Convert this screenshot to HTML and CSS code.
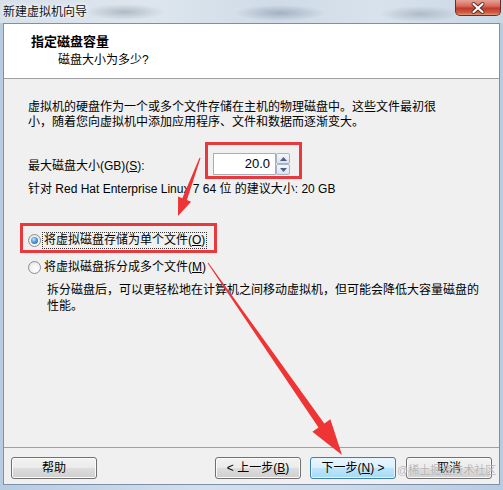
FILE: index.html
```html
<!DOCTYPE html>
<html lang="zh-CN">
<head>
<meta charset="utf-8">
<title>新建虚拟机向导</title>
<link rel="stylesheet" href="styles.css">
</head>
<body>
<div class="window">
  <div class="titlebar">
    <span class="title">新建虚拟机向导</span>
    <div class="close">
      <svg width="44" height="14" viewBox="0 0 44 14"><path d="M17.5 3 L26.5 11 M26.5 3 L17.5 11" stroke="#5a2a26" stroke-width="4" stroke-linecap="round"/><path d="M17.5 3 L26.5 11 M26.5 3 L17.5 11" stroke="#ffffff" stroke-width="2.2" stroke-linecap="round"/></svg>
    </div>
  </div>
  <div class="client">
    <div class="header">
      <div class="h-title">指定磁盘容量</div>
      <div class="h-sub">磁盘大小为多少?</div>
    </div>
    <div class="content">
      <p class="intro">虚拟机的硬盘作为一个或多个文件存储在主机的物理磁盘中。这些文件最初很小，随着您向虚拟机中添加应用程序、文件和数据而逐渐变大。</p>
      <div class="size-row">
        <span class="size-label">最大磁盘大小(GB)(<u>S</u>):</span>
        <div class="spin">
          <div class="spin-input">20.0</div>
          <div class="spin-btns">
            <span class="spin-btn"><svg width="7" height="4" viewBox="0 0 7 4"><path d="M0 4 L3.5 0 L7 4Z" fill="#4d6185"/></svg></span>
            <span class="spin-btn"><svg width="7" height="4" viewBox="0 0 7 4"><path d="M0 0 L7 0 L3.5 4Z" fill="#4d6185"/></svg></span>
          </div>
        </div>
      </div>
      <div class="hint">针对 Red Hat Enterprise Linux 7 64 位 的建议大小: 20 GB</div>
      <div class="radio-row first">
        <span class="radio checked"></span>
        <span class="radio-label focus">将虚拟磁盘存储为单个文件(<u>O</u>)</span>
      </div>
      <div class="radio-row">
        <span class="radio"></span>
        <span class="radio-label">将虚拟磁盘拆分成多个文件(<u>M</u>)</span>
      </div>
      <p class="desc">拆分磁盘后，可以更轻松地在计算机之间移动虚拟机，但可能会降低大容量磁盘的性能。</p>
    </div>
    <div class="footer">
      <button class="btn">帮助</button>
      <button class="btn back">&lt; 上一步(<u>B</u>)</button>
      <button class="btn next">下一步(<u>N</u>) &gt;</button>
      <button class="btn cancel">取消</button>
    </div>
  </div>
  <svg class="marks" width="503" height="490" viewBox="0 0 503 490">
    <rect x="206.5" y="143.5" width="94" height="34" fill="none" stroke="#e83a3e" stroke-width="3"/>
    <rect x="21.5" y="224.5" width="194" height="27" fill="none" stroke="#e83a3e" stroke-width="3"/>
    <polygon fill="#ee3434" points="199.5,157.8 200.5,158.2 186.9,200.1 191.1,201.8 178,216 178.1,196.6 182.3,198.3"/>
    <polygon fill="#ee3434" points="208.4,262.7 324.3,423.5 330.4,419.2 342,455 312.4,431.8 318.5,427.5 207.6,263.3"/>
  </svg>
  <div class="watermark">@稀土掘金技术社区</div>
</div>
</body>
</html>
```

FILE: styles.css
```css
html, body {
  margin: 0;
  padding: 0;
}

body {
  width: 503px;
  height: 490px;
  overflow: hidden;
  font-family: "Liberation Sans", "Noto Sans CJK SC", sans-serif;
  font-size: 12px;
  color: #000;
}

.window {
  position: relative;
  width: 503px;
  height: 490px;
  display: flex;
  flex-direction: column;
  background: linear-gradient(90deg, #b7cbe1 0%, #d3dfec 40%, #cbd9e9 70%, #b7cbe1 100%);
}

.titlebar {
  height: 23px;
  display: flex;
  align-items: flex-start;
  background:
    radial-gradient(ellipse 40px 8px at 125px 12px, rgba(120,135,150,0.45), transparent),
    radial-gradient(ellipse 45px 8px at 280px 13px, rgba(110,125,145,0.45), transparent),
    radial-gradient(ellipse 40px 8px at 420px 14px, rgba(120,135,150,0.4), transparent),
    linear-gradient(90deg, #d7e0e9 0%, #dde6ee 30%, #cfdbe7 55%, #d8e2ec 75%, #c9d7e5 100%);
}

.title {
  margin: 4px 0 0 3px;
  line-height: 16px;
  color: #111;
  text-shadow: 0 0 6px #fff, 0 0 3px #fff;
}

.close {
  margin-left: auto;
  margin-right: 2px;
  width: 46px;
  height: 16px;
  box-sizing: border-box;
  border: 1px solid #6b2b26;
  border-top: none;
  border-radius: 0 0 5px 5px;
  background: linear-gradient(#e4a296 0%, #d86b5c 40%, #c13a2a 55%, #cf5e45 85%, #e39a7c 100%);
  display: flex;
  align-items: center;
  justify-content: center;
}

.client {
  flex: 1;
  margin: 0 3px 5px 3px;
  border: 1px solid #7d90a7;
  background: #f0f0f0;
  display: flex;
  flex-direction: column;
}

.header {
  height: 55px;
  box-sizing: border-box;
  background: #fff;
  border-bottom: 1px solid #a0a0a0;
  padding: 9px 0 0 27px;
}

.h-title {
  font-size: 13px;
  font-weight: bold;
  line-height: 17px;
}

.h-sub {
  margin: 2px 0 0 27px;
  line-height: 16px;
}

.content {
  flex: 1;
  padding: 21px 0 0 24px;
}

.intro {
  margin: 0;
  width: 415px;
  line-height: 15px;
}

.size-row {
  margin-top: 23px;
  height: 22px;
  display: flex;
  align-items: center;
}

.size-label {
  width: 185px;
}

u {
  text-decoration: underline;
  text-underline-offset: 1px;
}

.spin {
  display: flex;
}

.spin-input {
  width: 63px;
  height: 22px;
  box-sizing: border-box;
  border: 1px solid #abadb3;
  background: #fff;
  text-align: right;
  padding-right: 5px;
  font-size: 13px;
  line-height: 20px;
}

.spin-btns {
  width: 14px;
  height: 22px;
  display: flex;
  flex-direction: column;
}

.spin-btn {
  height: 11px;
  box-sizing: border-box;
  border: 1px solid #a9b5c4;
  border-radius: 2px;
  background: linear-gradient(#f5f8fb, #dbe3ec);
  display: flex;
  align-items: center;
  justify-content: center;
}

.hint {
  margin-top: 7px;
  line-height: 15px;
}

.radio-row {
  margin-top: 10px;
  height: 17px;
  display: flex;
  align-items: center;
}

.radio-row.first {
  margin-top: 35px;
}

.radio {
  width: 13px;
  height: 13px;
  box-sizing: border-box;
  border: 1px solid #8e8f8f;
  border-radius: 50%;
  background: radial-gradient(circle at 60% 65%, #ffffff 0%, #f2f2f2 50%, #d8d8d8 100%);
  margin-right: 1px;
  display: flex;
  align-items: center;
  justify-content: center;
}

.radio.checked::after {
  content: "";
  width: 7px;
  height: 7px;
  border-radius: 50%;
  background: radial-gradient(circle at 40% 35%, #bfe6fb 0%, #4e9ad6 45%, #1a5e9e 100%);
}

.radio-label {
  border: 1px dotted transparent;
  padding: 0 1px;
  line-height: 15px;
}

.radio-label.focus {
  border-color: #333;
}

.desc {
  margin: 6px 0 0 19px;
  width: 440px;
  line-height: 16px;
}

.footer {
  height: 37px;
  box-sizing: border-box;
  border-top: 1px solid #a0a0a0;
  padding: 9px 7px 0 7px;
  display: flex;
  align-items: flex-start;
}

.btn {
  width: 86px;
  height: 22px;
  box-sizing: border-box;
  margin: 0;
  padding: 0;
  border: 1px solid #707070;
  border-radius: 3px;
  background: linear-gradient(#f2f2f2 0%, #ebebeb 50%, #dddddd 50%, #cfcfcf 100%);
  box-shadow: inset 0 0 0 1px #fbfbfb;
  font-family: "Liberation Sans", "Noto Sans CJK SC", sans-serif;
  font-size: 12px;
  color: #000;
  line-height: 18px;
}

.btn.back {
  margin-left: auto;
}

.btn.next {
  margin-left: 9px;
  border-color: #3c7fb1;
  background: linear-gradient(#eaf6fd 0%, #d9f0fc 50%, #bee6fd 50%, #a7d9f5 100%);
  box-shadow: inset 0 0 0 1px #e6f5fd;
}

.btn.cancel {
  margin-left: 10px;
}

.marks {
  position: absolute;
  left: 0;
  top: 0;
  pointer-events: none;
}

.watermark {
  position: absolute;
  left: 397px;
  top: 462px;
  font-size: 11px;
  line-height: 16px;
  color: rgba(150, 150, 150, 0.7);
  text-shadow: 0 0 1px rgba(255,255,255,0.8);
  pointer-events: none;
}
```
